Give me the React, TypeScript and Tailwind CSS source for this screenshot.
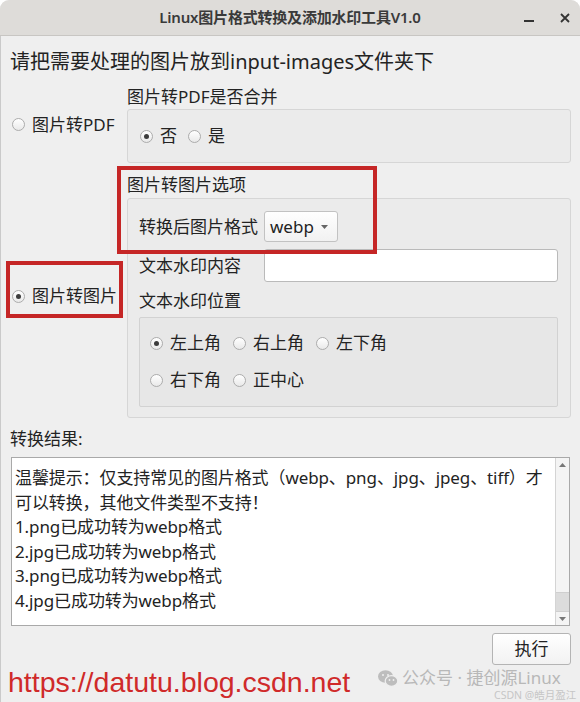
import React from "react";

function Radio({ label, checked = false }: { label: string; checked?: boolean }) {
  return (
    <label className="flex items-center gap-[7px] whitespace-nowrap">
      <span className="w-[13px] h-[13px] rounded-full border border-[#acacac] bg-linear-to-b from-white to-[#e9e9e9] flex items-center justify-center shrink-0">
        {checked && <span className="w-[5px] h-[5px] rounded-full bg-[#3c3c3c]" />}
      </span>
      <span>{label}</span>
    </label>
  );
}

function WeChatIcon() {
  return (
    <svg width="20" height="17" viewBox="0 0 20 17" fill="#bdbdbd">
      <ellipse cx="7.5" cy="6.5" rx="7.5" ry="6.2" />
      <ellipse cx="13.5" cy="11" rx="6.3" ry="5.3" stroke="#efefef" strokeWidth="1.2" />
      <circle cx="5" cy="5" r="1" fill="#efefef" />
      <circle cx="10" cy="5" r="1" fill="#efefef" />
      <circle cx="11.5" cy="10" r="0.9" fill="#efefef" />
      <circle cx="15.5" cy="10" r="0.9" fill="#efefef" />
    </svg>
  );
}

export default function App() {
  const lines = [
    "温馨提示：仅支持常见的图片格式（webp、png、jpg、jpeg、tiff）才",
    "可以转换，其他文件类型不支持！",
    "1.png已成功转为webp格式",
    "2.jpg已成功转为webp格式",
    "3.png已成功转为webp格式",
    "4.jpg已成功转为webp格式",
  ];

  return (
    <div className="w-[580px] h-[702px] bg-white overflow-hidden relative font-['Noto_Sans','Noto_Sans_CJK_SC',sans-serif] text-[#232323]">
      <div className="h-full bg-[#efefef] rounded-t-[9px] flex flex-col">
        {/* title bar */}
        <div className="h-[36px] shrink-0 bg-[#dedcd9] border-b border-[#c8c6c3] rounded-t-[9px] grid grid-cols-[1fr_auto_1fr] items-center">
          <div />
          <div className="text-[15px] font-semibold text-[#3a3a3a] tracking-[-0.2px]">Linux图片格式转换及添加水印工具V1.0</div>
          <div className="flex justify-end items-center gap-[26px] pr-[10px] text-[#333]">
            <span className="w-[10px] h-[2px] bg-[#333] mt-[6px]" />
            <svg width="10" height="10" viewBox="0 0 10 10" stroke="#333" strokeWidth="1.8">
              <path d="M1 1 L9 9 M9 1 L1 9" />
            </svg>
          </div>
        </div>

        <div className="flex-1 border-l border-[#cacaca]">
          <div className="mt-[12px] pl-[9px] text-[20px] leading-[28px]">请把需要处理的图片放到input-images文件夹下</div>

          <div className="mt-[10px] ml-[9px] grid grid-cols-[117px_444px] gap-y-[11px] text-[17px]">
            {/* 图片转PDF */}
            <div className="flex items-center pl-[2px]">
              <Radio label="图片转PDF" />
            </div>
            <div>
              <div className="leading-[22px]">图片转PDF是否合并</div>
              <div className="mt-[1px] h-[54px] bg-[#ebebeb] border border-[#d6d6d6] rounded-[3px] flex items-center pl-[12px] gap-[11px]">
                <Radio label="否" checked />
                <Radio label="是" />
              </div>
            </div>

            {/* 图片转图片 */}
            <div className="flex items-center pl-[2px]">
              <Radio label="图片转图片" checked />
            </div>
            <div>
              <div className="leading-[22px]">图片转图片选项</div>
              <div className="mt-[2px] bg-[#ebebeb] border border-[#d6d6d6] rounded-[3px] pt-[12px] pl-[11px] pr-[12px] pb-[10px]">
                <div className="flex items-center h-[31px]">
                  <span className="w-[125px]">转换后图片格式</span>
                  <div className="w-[74px] h-[31px] bg-linear-to-b from-white to-[#f1f1f1] border border-[#c2c2c2] rounded-[3px] flex items-center justify-between pl-[5px] pr-[9px]">
                    <span>webp</span>
                    <svg width="7" height="4" viewBox="0 0 7 4" fill="#666">
                      <path d="M0 0 H7 L3.5 4 Z" />
                    </svg>
                  </div>
                </div>
                <div className="mt-[7px] flex items-center">
                  <span className="w-[125px]">文本水印内容</span>
                  <div className="flex-1 h-[33px] bg-white border border-[#bababa] rounded-[3px]" />
                </div>
                <div className="mt-[8px] leading-[22px]">文本水印位置</div>
                <div className="mt-[5px] h-[90px] bg-[#e7e7e7] border border-[#d2d2d2] rounded-[2px] pt-[15px] pl-[10px]">
                  <div className="h-[20px] flex items-center gap-[12px]">
                    <Radio label="左上角" checked />
                    <Radio label="右上角" />
                    <Radio label="左下角" />
                  </div>
                  <div className="mt-[17px] h-[20px] flex items-center gap-[12px]">
                    <Radio label="右下角" />
                    <Radio label="正中心" />
                  </div>
                </div>
              </div>
            </div>
          </div>

          <div className="mt-[10px] pl-[9px] text-[17px] leading-[22px]">转换结果:</div>

          <div className="mt-[7px] ml-[10px] w-[559px] h-[169px] bg-white border border-[#a9a9a9] flex">
            <div className="flex-1 pl-[3px] pt-[8px] text-[17px] leading-[24.6px] whitespace-nowrap tracking-[-0.1px]">
              {lines.map((l) => (
                <div key={l}>{l}</div>
              ))}
            </div>
            <div className="w-[14px] border-l border-[#d4d4d4] bg-[#f4f4f4] flex flex-col">
              <div className="h-[14px] flex items-center justify-center">
                <svg width="7" height="4" viewBox="0 0 7 4" fill="#777">
                  <path d="M0 4 H7 L3.5 0 Z" />
                </svg>
              </div>
              <div className="flex-1 flex flex-col justify-end">
                <div className="h-[20px] bg-[#dcdcdc] border-y border-[#cfcfcf]" />
              </div>
              <div className="h-[13px] flex items-center justify-center">
                <svg width="7" height="4" viewBox="0 0 7 4" fill="#777">
                  <path d="M0 0 H7 L3.5 4 Z" />
                </svg>
              </div>
            </div>
          </div>

          <div className="mt-[7px] flex justify-end pr-[9px]">
            <button className="w-[79px] h-[32px] bg-linear-to-b from-white to-[#f2f2f2] border border-[#b4b4b4] rounded-[3px] text-[17px]">
              执行
            </button>
          </div>
        </div>
      </div>

      {/* annotation boxes */}
      <div className="absolute left-[117px] top-[166px] w-[260px] h-[88px] border-[4px] border-[#c52626]" />
      <div className="absolute left-[6px] top-[261px] w-[117px] h-[57px] border-[4px] border-[#c52626]" />

      {/* watermarks */}
      <div className="absolute left-[8px] top-[665px] text-[28.5px] leading-[34px] text-[#d02a2a] font-['Liberation_Sans',Arial,sans-serif]">
        https://datutu.blog.csdn.net
      </div>
      <div className="absolute left-[378px] top-[668px] flex items-center gap-[4px] text-[17px] leading-[20px] text-[#b8b8b8]">
        <WeChatIcon />
        <span>公众号 · 捷创源Linux</span>
      </div>
      <div className="absolute left-[494px] top-[690px] text-[10.5px] leading-[11px] text-[#c6c6c6] whitespace-nowrap">CSDN @皓月盈江</div>
    </div>
  );
}
